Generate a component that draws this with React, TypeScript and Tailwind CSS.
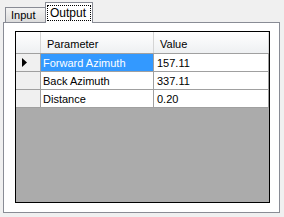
import React from "react";

const rows = [
  { name: "Forward Azimuth", value: "157.11" },
  { name: "Back Azimuth", value: "337.11" },
  { name: "Distance", value: "0.20" },
];

export default function App() {
  return (
    <div
      className="w-[284px] h-[217px] bg-[#f0f0f0] flex flex-col text-[11px] text-black"
      style={{ fontFamily: '"Liberation Sans", Arial, sans-serif' }}
    >
      {/* Tabs */}
      <div className="h-[22px] flex items-end pl-[5px] shrink-0">
        <div className="w-[40px] h-[15px] border-l border-t border-[#898c95] bg-gradient-to-b from-[#f3f3f3] to-[#dcdcdc] flex items-center pl-[5px] leading-none">
          Input
        </div>
        <div className="relative z-10 -mb-px w-[48px] h-[21px] border-l border-t border-r border-[#898c95] bg-white flex items-start pt-[2px] pl-[1px]">
          <div className="h-[16px] w-[44px] border border-dotted border-black flex items-center pl-[2px] leading-none text-[12px]">
            Output
          </div>
        </div>
      </div>

      {/* Panel */}
      <div className="ml-[3px] w-[277px] h-[191px] border border-[#898c95] bg-white pt-[8px] pl-[11px]">
        <div className="w-[255px] h-[172px] border border-black bg-[#ababab] flex flex-col">
          {/* Header */}
          <div className="h-[22px] flex border-b border-[#a0a0a0] bg-gradient-to-b from-white to-[#eef0f2] shrink-0">
            <div className="w-[25px] border-r border-[#d5d5d5]" />
            <div className="w-[113px] border-r border-[#d5d5d5] flex items-center pl-[6px] pt-[3px]">Parameter</div>
            <div className="w-[115px] border-r border-[#d5d5d5] flex items-center pl-[6px] pt-[3px]">Value</div>
          </div>
          {rows.map((r, i) => (
            <div key={r.name} className="h-[18px] flex border-b border-[#a0a0a0] shrink-0">
              <div className="w-[25px] border-r border-[#a0a0a0] bg-[#f0f0f0] flex items-center pl-[6px]">
                {i === 0 && (
                  <svg width="5" height="9" viewBox="0 0 5 9">
                    <polygon points="0,0 5,4.5 0,9" fill="#000" />
                  </svg>
                )}
              </div>
              <div
                className={`w-[113px] border-r border-[#a0a0a0] flex items-center pl-[2px] pt-px ${
                  i === 0 ? "bg-[#3399ff] text-white" : "bg-white"
                }`}
              >
                {r.name}
              </div>
              <div className="w-[115px] border-r border-[#a0a0a0] bg-white flex items-center pl-[3px] pt-px">
                {r.value}
              </div>
            </div>
          ))}
        </div>
      </div>
    </div>
  );
}
